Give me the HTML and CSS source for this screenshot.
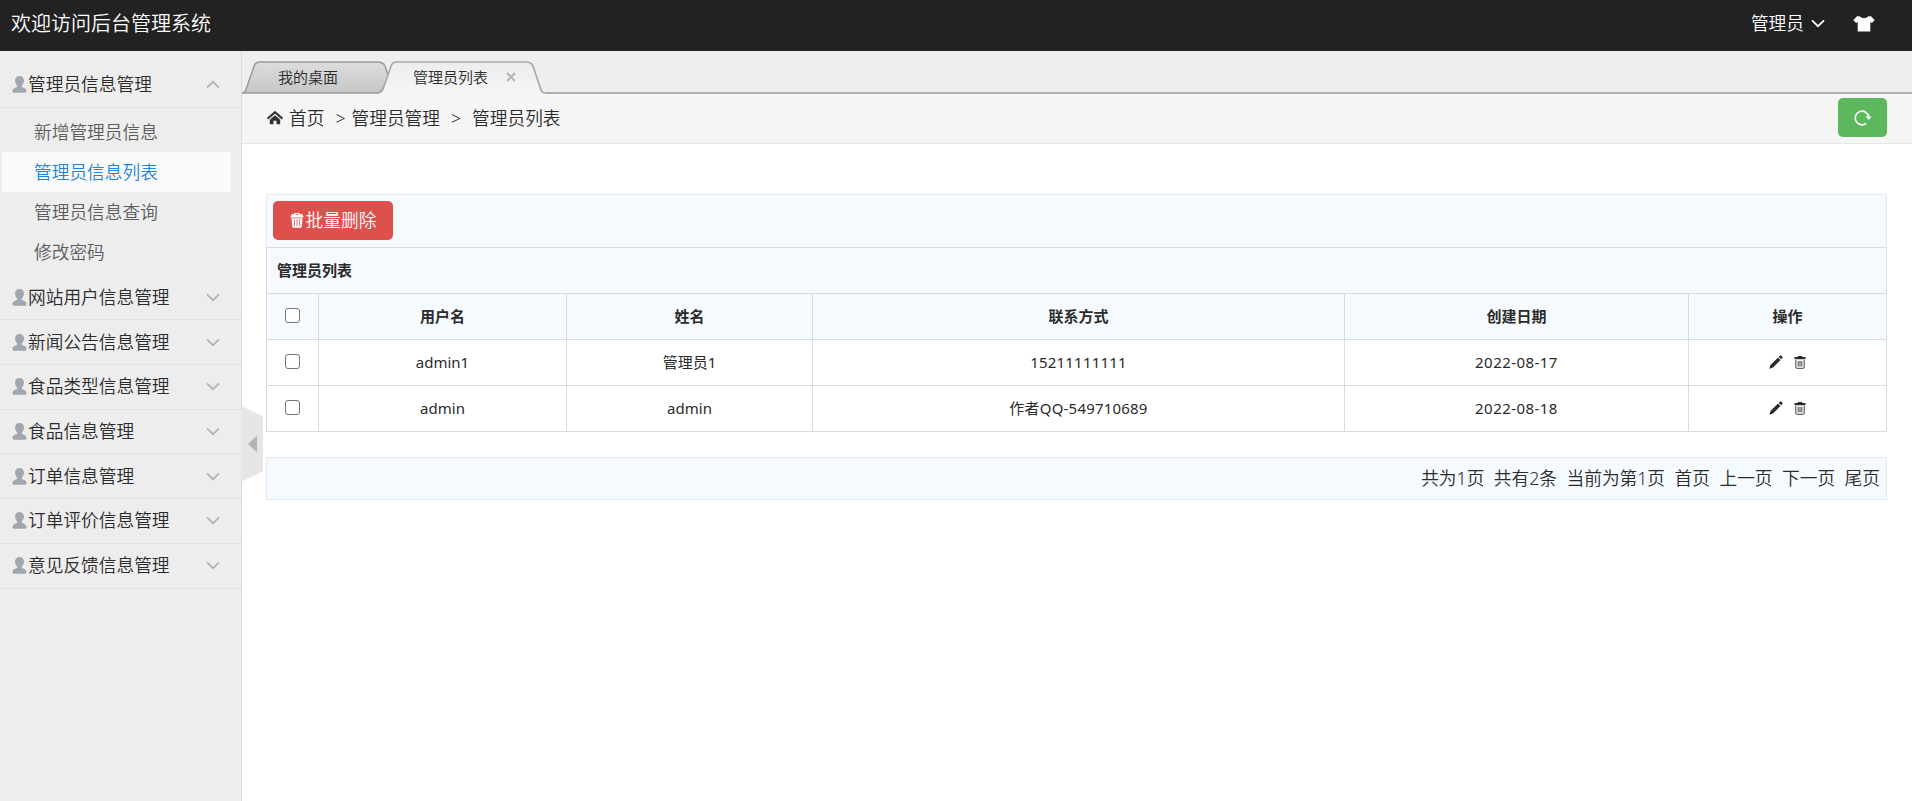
FILE: index.html
```html
<!DOCTYPE html>
<html lang="zh-CN">
<head>
<meta charset="utf-8">
<title>后台管理系统</title>
<link rel="stylesheet" href="styles.css">
</head>
<body>
<svg width="0" height="0" class="defs">
  <symbol id="user" viewBox="0 0 14 17"><path d="M7 0C4.400 0 2.500 1.900 2.500 4.500 2.500 6.500 3.500 8.300 4.600 9.300V11C3 11.600 0 12.300 0 14.800 0 16.300.8 16.800 2 16.800H12C13.200 16.800 14 16.300 14 14.800 14 12.300 11 11.600 9.400 11V9.300C10.500 8.300 11.500 6.500 11.500 4.500 11.500 1.900 9.600 0 7 0Z"/></symbol>
  <symbol id="down" viewBox="0 0 14 9"><path d="M1 1.300 7 7.200 13 1.300" fill="none" stroke="currentColor" stroke-width="1.700"/></symbol>
  <symbol id="trash" viewBox="0 0 14 15"><path fill="currentColor" fill-rule="evenodd" d="M4.300 0H9.700L10.200 1.300H12.500L13.700 4.600H.3L1.500 1.300H3.800ZM5.300 1V1.700H8.700V1ZM1.500 5.200H12.500L11.800 13.600Q11.700 14.800 10.500 14.800H3.500Q2.300 14.800 2.200 13.600ZM3.900 6.200V13.300H4.700V6.200ZM6.600 6.200V13.300H7.400V6.200ZM9.300 6.200V13.300H10.100V6.200Z"/></symbol>
  <symbol id="bin" viewBox="0 0 12 13"><path fill="none" stroke="currentColor" d="M1.800 4V11.200Q1.800 12.300 2.900 12.300H9.100Q10.200 12.300 10.200 11.200V4M4.200 5V10.500M6 5V10.500M7.800 5V10.500" stroke-width=".9"/><path fill="currentColor" d="M3.800 0H8.200V1H11.500V3.200H.5V1H3.800Z"/></symbol>
  <symbol id="pen" viewBox="0 0 14 14"><path fill="currentColor" d="M.3 13.700 1.500 10 9 2.500 11.500 5 4 12.500ZM9.700 1.800 11 .6Q11.700.1 12.300.7L13.300 1.700Q13.900 2.300 13.400 3L12.200 4.300Z"/></symbol>
</svg>
<header class="header">
  <div class="logo">欢迎访问后台管理系统</div>
  <div class="account"><span>管理员</span><svg class="caret"><use href="#down"/></svg>
    <svg class="skin" viewBox="0 0 22 16"><path fill="#fff" d="M6.500.3Q11 4 15.500.3H18L21.700 4.200 18.800 7 17.300 5.800V15.500H4.700V5.800L3.200 7 .3 4.200 4 .3Z"/></svg>
  </div>
</header>
<div class="main">
  <aside class="side">
    <div class="group open"><svg class="user"><use href="#user"/></svg><span>管理员信息管理</span><svg class="arrow up"><use href="#down"/></svg></div>
    <ul class="sub">
      <li>新增管理员信息</li>
      <li class="active">管理员信息列表</li>
      <li>管理员信息查询</li>
      <li>修改密码</li>
    </ul>
    <div class="group"><svg class="user"><use href="#user"/></svg><span>网站用户信息管理</span><svg class="arrow"><use href="#down"/></svg></div>
    <div class="group"><svg class="user"><use href="#user"/></svg><span>新闻公告信息管理</span><svg class="arrow"><use href="#down"/></svg></div>
    <div class="group"><svg class="user"><use href="#user"/></svg><span>食品类型信息管理</span><svg class="arrow"><use href="#down"/></svg></div>
    <div class="group"><svg class="user"><use href="#user"/></svg><span>食品信息管理</span><svg class="arrow"><use href="#down"/></svg></div>
    <div class="group"><svg class="user"><use href="#user"/></svg><span>订单信息管理</span><svg class="arrow"><use href="#down"/></svg></div>
    <div class="group"><svg class="user"><use href="#user"/></svg><span>订单评价信息管理</span><svg class="arrow"><use href="#down"/></svg></div>
    <div class="group"><svg class="user"><use href="#user"/></svg><span>意见反馈信息管理</span><svg class="arrow"><use href="#down"/></svg></div>
    <svg class="toggle" viewBox="0 0 22 76"><path d="M0 0 22 10V65L0 76Z" fill="#e6e6e6"/><path d="M7 38 16 29.500V46.500Z" fill="#b5b5b5"/></svg>
  </aside>
  <section class="content">
    <nav class="tabs">
      <svg class="tab-shapes" viewBox="0 0 310 33">
        <defs><linearGradient id="idle" x2="0" y2="1"><stop stop-color="#dcdedd"/><stop offset="1" stop-color="#c6c6c6"/></linearGradient>
        <linearGradient id="current" x2="0" y2="1"><stop stop-color="#ededee"/><stop offset="1" stop-color="#f5f5f5"/></linearGradient></defs>
        <path d="M0 32C3 32 3.500 30 4.500 27L12.500 4Q14 1 17 1H135Q141 1 143 5L147 17 140 29Q138 32 134 32Z" fill="url(#idle)" stroke="#9b9b9b" stroke-width="1.500"/>
        <path d="M137 33Q140 32 141 29L150 4Q151 1 154 1H284Q289 1 291 5L300 30Q301 32 304 33Z" fill="url(#current)"/>
        <path d="M134 32Q139 32 141 28L149.500 4Q151 1 154 1H284Q289 1 291 5L299 29Q300 32 304 32H310" fill="none" stroke="#a9a9a9" stroke-width="1.700"/>
      </svg>
      <span class="tab">我的桌面</span><span class="tab second">管理员列表</span>
      <svg class="close" viewBox="0 0 10 10"><path d="M1 1 9 9M9 1 1 9" stroke="#b4b4b4" stroke-width="2"/></svg>
    </nav>
    <div class="crumbs">
      <svg class="home" viewBox="0 0 16 14"><path d="M.6 7.600 8 1.200 15.400 7.600" fill="none" stroke="#333" stroke-width="2.100"/><path fill="#333" d="M2.800 8.800 8 4.200 13.200 8.800V13.200H9.500V9.800H6.500V13.200H2.800Z"/></svg>
      <span>首页</span><span class="sep">&gt;</span><span>管理员管理</span><span class="sep wide">&gt;</span><span>管理员列表</span>
      <button class="refresh"><svg viewBox="0 0 18 16"><path d="M12.300 13.300A6.800 6.800 0 1 1 14.800 7" fill="none" stroke="#fff" stroke-width="1.700"/><path d="M11.600 6.500H17.600L14.700 10Z" fill="#fff"/></svg></button>
    </div>
    <div class="page">
      <div class="toolbar"><button class="delete"><svg><use href="#trash"/></svg><span>批量删除</span></button></div>
      <table>
        <colgroup><col class="c1"><col class="c2"><col class="c3"><col class="c4"><col class="c5"><col class="c6"></colgroup>
        <tr><th colspan="6" class="caption">管理员列表</th></tr>
        <tr><th><i class="box"></i></th><th>用户名</th><th>姓名</th><th>联系方式</th><th>创建日期</th><th>操作</th></tr>
        <tr><td><i class="box"></i></td><td>admin1</td><td>管理员1</td><td class="phone">15211111111</td><td class="date">2022-08-17</td><td><svg class="pen"><use href="#pen"/></svg><svg class="bin"><use href="#bin"/></svg></td></tr>
        <tr><td><i class="box"></i></td><td>admin</td><td>admin</td><td class="phone">作者QQ-549710689</td><td class="date">2022-08-18</td><td><svg class="pen"><use href="#pen"/></svg><svg class="bin"><use href="#bin"/></svg></td></tr>
      </table>
      <div class="pager"><span>共为1页</span><span>共有2条</span><span>当前为第1页</span><span>首页</span><span>上一页</span><span>下一页</span><span>尾页</span></div>
    </div>
  </section>
</div>
</body>
</html>
```
FILE: styles.css
```css
* { box-sizing: border-box; }
body { margin: 0; height: 801px; overflow: hidden; display: flex; flex-direction: column; background: #fff; color: #2b2b2b; font: 17.7px/24px "Noto Sans", "Noto Sans CJK SC", sans-serif; font-weight: 350; }
.defs { position: absolute; }
svg { display: block; flex: none; }
button { border: 0; font: inherit; color: #fff; display: flex; align-items: center; justify-content: center; border-radius: 5px; padding: 0; }

.header { height: 51px; background: #222; color: #fff; display: flex; justify-content: space-between; padding: 0 37px 0 11px; flex: none; }
.logo { font-size: 20px; line-height: 48px; }
.account { display: flex; align-items: center; height: 47px; }
.account span { padding-bottom: 2px; }
.caret { width: 14px; height: 9px; margin: 0 28px 0 7px; }
.skin { width: 22px; height: 16px; }

.main { display: flex; flex: 1; min-height: 0; }
.side { width: 242px; flex: none; background: #ededed; border-right: 1px solid #ddd; padding-top: 12px; position: relative; }
.group { height: 44.700px; border-bottom: 1px solid #e2e2e2; display: flex; align-items: center; padding: 0 21px 0 12px; }
.group span { padding-bottom: 1px; }
.user { width: 15px; height: 17px; margin-right: 1px; fill: #a1a7af; }
.arrow { width: 14px; height: 9px; margin-left: auto; color: #b2b2b2; }
.up { transform: scaleY(-1); }
.sub { list-style: none; margin: 0; padding: 4px 10px 4px 2px; color: #5c5c5c; }
.sub li { height: 40px; line-height: 40px; padding-left: 32px; }
.sub .active { background: #fafafa; color: #2482d8; }
.toggle { position: absolute; left: 241px; top: 355px; width: 22px; height: 76px; }

.content { flex: 1; min-width: 0; }
.tabs { height: 43px; background: linear-gradient(#b0b0b0, #b0b0b0) 304px 41px / 100% 2px no-repeat #eeeef0; position: relative; display: flex; align-items: center; padding: 9px 0 0 36px; font-size: 15px; }
.tab-shapes { position: absolute; left: 0; top: 10px; width: 310px; height: 33px; }
.tab, .close { position: relative; }
.second { margin-left: 75px; }
.close { width: 10px; height: 10px; margin-left: 18px; }
.crumbs { height: 50px; background: #f5f5f5; border-bottom: 1px solid #e4e4e4; padding: 0 25px 2px; display: flex; align-items: center; }
.home { width: 16px; height: 14px; margin-right: 6px; }
.sep { margin: 0 6px 0 11px; }
.wide { margin-right: 11px; }
.refresh { width: 49px; height: 39px; background: #5cb85c; margin-left: auto; }
.refresh svg { width: 18px; height: 16px; }

.page { padding: 50px 25px 0 24px; }
.toolbar { height: 53px; background: #f5fafe; border: 1px solid #e3ebf1; border-bottom: 0; padding: 6px; }
.delete { width: 120px; height: 39px; background: #dd514c; }
.delete svg { width: 14px; height: 15px; margin-right: 2px; }
.delete span { padding-bottom: 2px; }
table { width: 1621px; table-layout: fixed; border-collapse: collapse; font-size: 15px; }
th, td { height: 46px; border: 1px solid #d9dcdf; padding: 0 0 2px; text-align: center; line-height: 22px; font-weight: 400; }
th { background: #f5fafe; font-weight: 700; }
th.caption { text-align: left; padding-left: 10px; }
.c1 { width: 52px; } .c2 { width: 248px; } .c3 { width: 246px; } .c4 { width: 532px; } .c5 { width: 344px; } .c6 { width: 198px; }
.phone { letter-spacing: .2px; }
.date { letter-spacing: .450px; }
.box { display: block; width: 15px; height: 15px; border: 1.500px solid #767676; border-radius: 3px; background: #fff; margin: 0 auto; }
.pen, .bin { display: inline-block; vertical-align: -1px; }
.pen { width: 14px; height: 14px; margin-right: 11px; }
.bin { width: 12px; height: 13px; }
.pager { margin-top: 25px; height: 43px; background: #f5fafe; border: 1px solid #e3ebf1; display: flex; justify-content: flex-end; align-items: center; gap: 9.500px; padding: 0 6px 2px 0; }
```
